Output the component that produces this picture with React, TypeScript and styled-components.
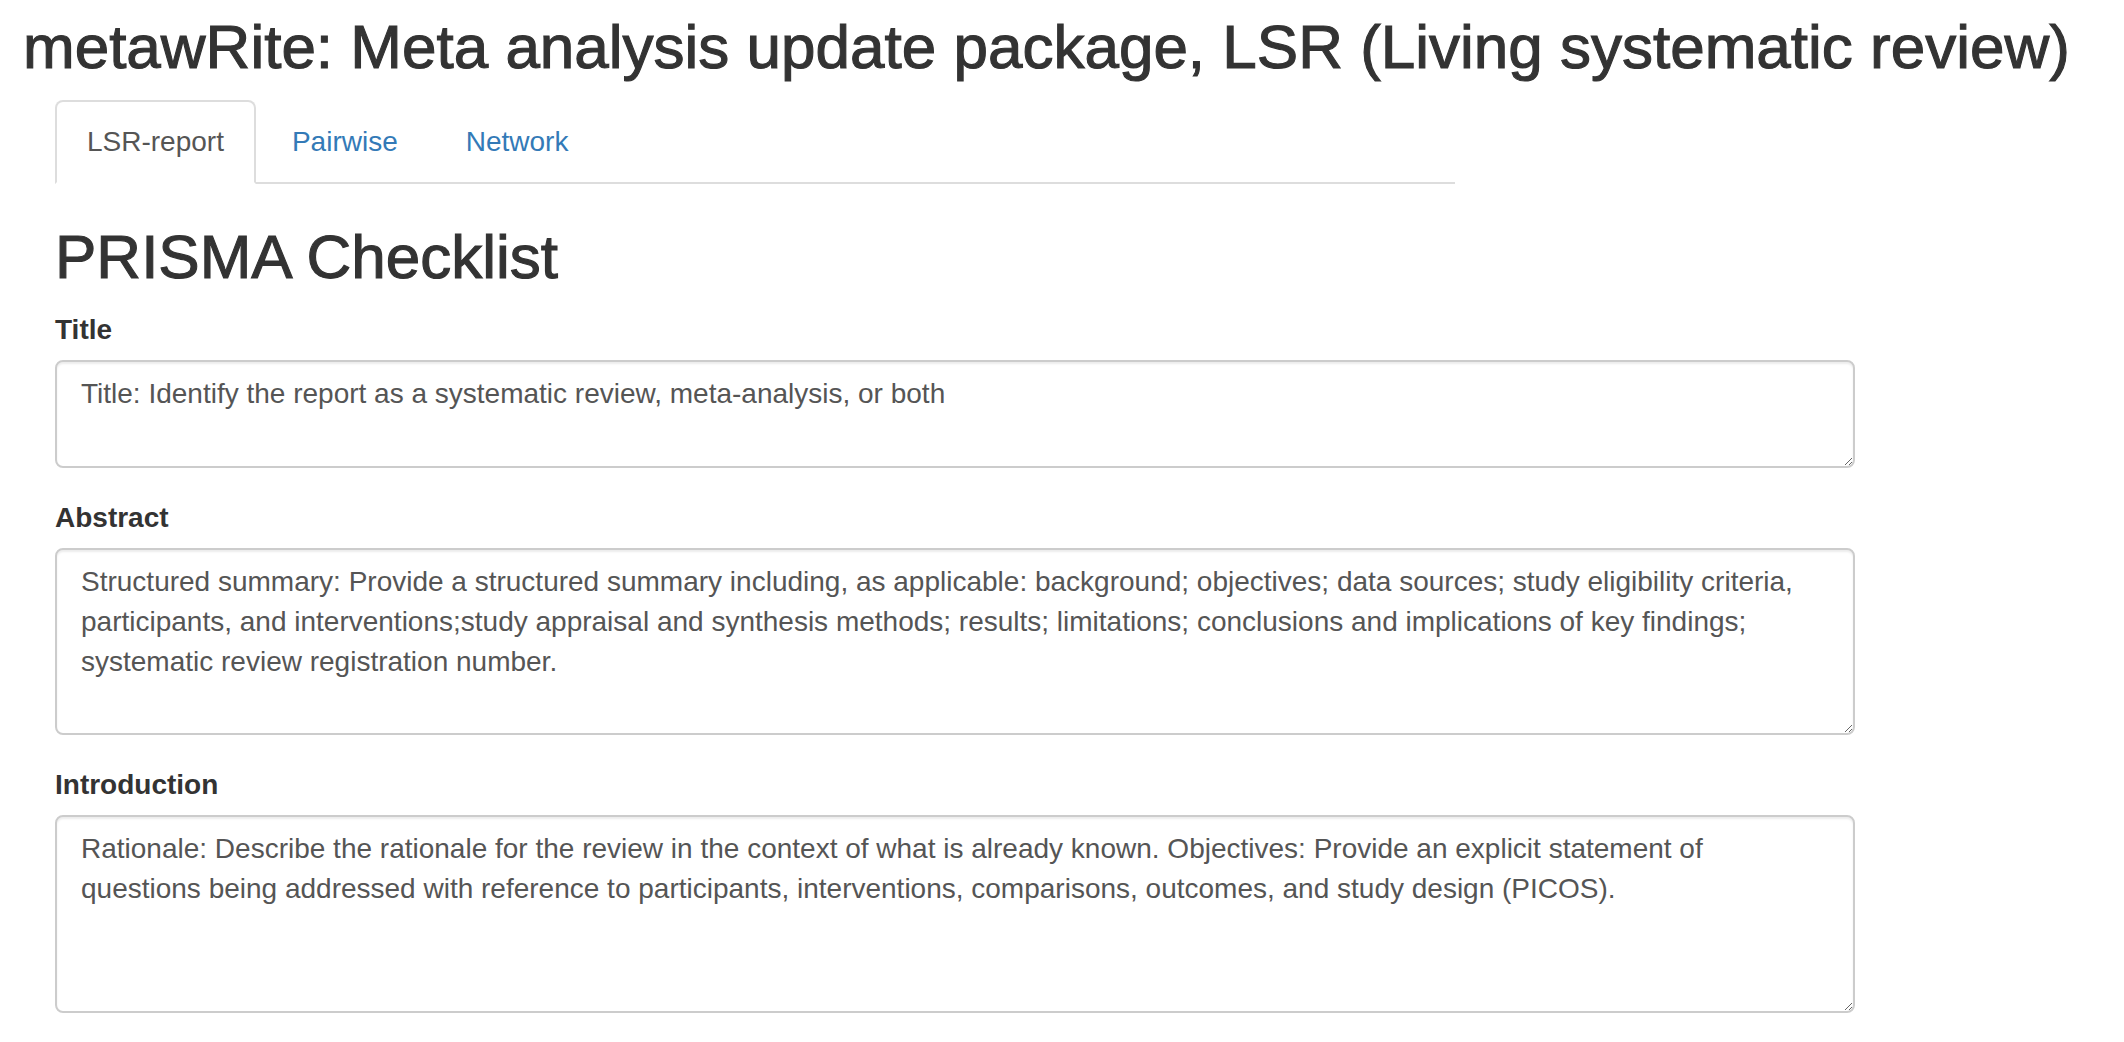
import React from "react";
import styled, { createGlobalStyle } from "styled-components";

const GlobalStyle = createGlobalStyle`
  html, body {
    margin: 0;
    padding: 0;
    background: #fff;
  }
  body {
    font-family: "Liberation Sans", Arial, Helvetica, sans-serif;
    font-size: 28px;
    line-height: 40px;
    color: #333;
  }
  * {
    box-sizing: border-box;
  }
`;

const Page = styled.div`
  padding: 14px 0 40px 23px;
`;

// headings in the shot are Helvetica Neue medium: regular face + a thin stroke
const AppTitle = styled.h2`
  margin: 0 0 20px;
  font-size: 62px;
  font-weight: 400;
  line-height: 66px;
  color: #333;
  white-space: nowrap;
  -webkit-text-stroke: 1.1px #333;
`;

const Main = styled.div`
  padding-left: 32px;
`;

const NavTabs = styled.ul`
  display: flex;
  width: 1400px;
  margin: 0;
  padding: 0;
  list-style: none;
  border-bottom: 2px solid #ddd;
`;

const TabItem = styled.li`
  margin-right: 4px;
  margin-bottom: -2px;
`;

const TabLink = styled.a<{ $active?: boolean }>`
  display: block;
  padding: 20px 30px;
  line-height: 40px;
  font-size: 28px;
  text-decoration: none;
  border: 2px solid ${(p) => (p.$active ? "#ddd" : "transparent")};
  border-bottom-color: transparent;
  border-radius: 8px 8px 0 0;
  background: ${(p) => (p.$active ? "#fff" : "transparent")};
  color: ${(p) => (p.$active ? "#555" : "#337ab7")};
  cursor: ${(p) => (p.$active ? "default" : "pointer")};
`;

const Heading = styled.h1`
  margin: 40px 0 20px;
  font-size: 62px;
  font-weight: 400;
  line-height: 66px;
  color: #333;
  -webkit-text-stroke: 1.1px #333;
`;

const FormGroup = styled.div`
  margin-bottom: 30px;
`;

const Label = styled.label`
  display: inline-block;
  margin-bottom: 10px;
  font-weight: 700;
  font-size: 28px;
  line-height: 40px;
  color: #333;
`;

const TextArea = styled.textarea<{ $height: number }>`
  display: block;
  width: 1800px;
  height: ${(p) => p.$height}px;
  padding: 12px 24px;
  font-family: "Liberation Sans", Arial, Helvetica, sans-serif;
  font-size: 28px;
  line-height: 40px;
  color: #555;
  background: #fff;
  border: 2px solid #ccc;
  border-radius: 8px;
  box-shadow: inset 0 2px 2px rgba(0, 0, 0, 0.075);
  resize: vertical;
  outline: none;
`;

const tabs = [
  { label: "LSR-report", active: true },
  { label: "Pairwise" },
  { label: "Network" },
];

const fields = [
  {
    label: "Title",
    height: 108,
    text: "Title: Identify the report as a systematic review, meta-analysis, or both",
  },
  {
    label: "Abstract",
    height: 187,
    text: "Structured summary: Provide a structured summary including, as applicable: background; objectives; data sources; study eligibility criteria, participants, and interventions;study appraisal and synthesis methods; results; limitations; conclusions and implications of key findings; systematic review registration number.",
  },
  {
    label: "Introduction",
    height: 198,
    text: "Rationale: Describe the rationale for the review in the context of what is already known. Objectives: Provide an explicit statement of questions being addressed with reference to participants, interventions, comparisons, outcomes, and study design (PICOS).",
  },
];

export default function App() {
  return (
    <Page>
      <GlobalStyle />
      <AppTitle>metawRite: Meta analysis update package, LSR (Living systematic review)</AppTitle>
      <Main>
        <NavTabs>
          {tabs.map((t) => (
            <TabItem key={t.label}>
              <TabLink $active={t.active}>{t.label}</TabLink>
            </TabItem>
          ))}
        </NavTabs>
        <Heading>PRISMA Checklist</Heading>
        {fields.map((f) => (
          <FormGroup key={f.label}>
            <Label>{f.label}</Label>
            <TextArea $height={f.height} defaultValue={f.text} />
          </FormGroup>
        ))}
      </Main>
    </Page>
  );
}
